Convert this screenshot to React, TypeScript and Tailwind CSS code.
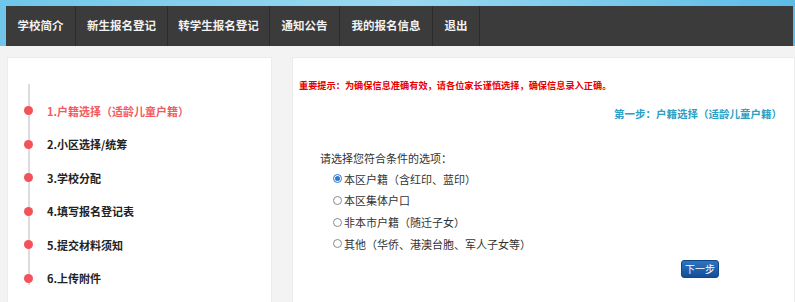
import React from "react";

const navItems = [
  { t: "学校简介", w: "w-[70px]" },
  { t: "新生报名登记", w: "w-[92px]" },
  { t: "转学生报名登记", w: "w-[102px]" },
  { t: "通知公告", w: "w-[70px]" },
  { t: "我的报名信息", w: "w-[93px]" },
  { t: "退出", w: "w-[47px]" },
];

const steps = [
  "1.户籍选择（适龄儿童户籍）",
  "2.小区选择/统筹",
  "3.学校分配",
  "4.填写报名登记表",
  "5.提交材料须知",
  "6.上传附件",
];

const options = [
  "本区户籍（含红印、蓝印）",
  "本区集体户口",
  "非本市户籍（随迁子女）",
  "其他（华侨、港澳台胞、军人子女等）",
];

export default function App() {
  return (
    <div className="w-[795px] h-[302px] overflow-hidden bg-[#f3f3f3] font-['Noto_Sans_CJK_SC',sans-serif]">
      <div className="bg-gradient-to-r from-[#6fc6ea] via-[#9ad9f0] to-[#5cbce6] pt-[6px] pl-[6px] pr-[2px]">
        <div className="h-[40px] bg-[#3b3b3b] flex">
          {navItems.map((n) => (
            <div
              key={n.t}
              className={`${n.w} h-full flex items-center justify-center border-r border-[#2c2c2c] text-[11.5px] font-bold text-[#f2f2f2]`}
            >
              {n.t}
            </div>
          ))}
        </div>
      </div>
      <div className="flex pt-[11px] pl-[7px] gap-[20px]">
        <div className="w-[265px] h-[260px] bg-white border border-[#ececec] pt-[26px] pl-[20px]">
          <div className="h-[201px] border-l-2 border-[#dcdcdc] pt-[10px] flex flex-col">
            {steps.map((s, i) => (
              <div key={s} className="relative h-[33.5px] shrink-0 flex items-center pl-[17px]">
                <span className="absolute left-[-6px] w-[9px] h-[9px] rounded-full bg-[#f2525a]" />
                <span
                  className={`text-[11px] font-bold ${i === 0 ? "text-[#f25a5f]" : "text-[#222]"}`}
                >
                  {s}
                </span>
              </div>
            ))}
          </div>
        </div>
        <div className="flex-1 h-[260px] bg-white border border-[#ececec] pt-[21px]">
          <div className="pl-[6px] text-[9.2px] leading-[12px] font-bold text-[#e60000]">
            重要提示：为确保信息准确有效，请各位家长谨慎选择，确保信息录入正确。
          </div>
          <div className="mt-[15px] pr-[12px] text-right text-[10.5px] leading-[16px] font-bold text-[#2ba0c4]">
            第一步：户籍选择（适龄儿童户籍）
          </div>
          <div className="mt-[28px] pl-[27px] text-[11px] leading-[16px] text-[#333]">
            请选择您符合条件的选项：
          </div>
          <div className="mt-[2px] pl-[40px] flex flex-col">
            {options.map((o, i) => (
              <div key={o} className="h-[21.7px] flex items-center text-[11px] text-[#333]">
                {i === 0 ? (
                  <span className="w-[9px] h-[9px] rounded-full border border-[#2a78d4] flex items-center justify-center mr-[2px]">
                    <span className="w-[5px] h-[5px] rounded-full bg-[#2a78d4]" />
                  </span>
                ) : (
                  <span className="w-[9px] h-[9px] rounded-full border border-[#8a8a8a] mr-[2px]" />
                )}
                <span>{o}</span>
              </div>
            ))}
          </div>
          <div className="mt-[5px] pl-[388px]">
            <div className="w-[38px] h-[18px] rounded-[3px] bg-gradient-to-b from-[#2d74c2] to-[#134f98] border border-[#10468a] flex items-center justify-center text-[10px] text-white">
              下一步
            </div>
          </div>
        </div>
      </div>
    </div>
  );
}
